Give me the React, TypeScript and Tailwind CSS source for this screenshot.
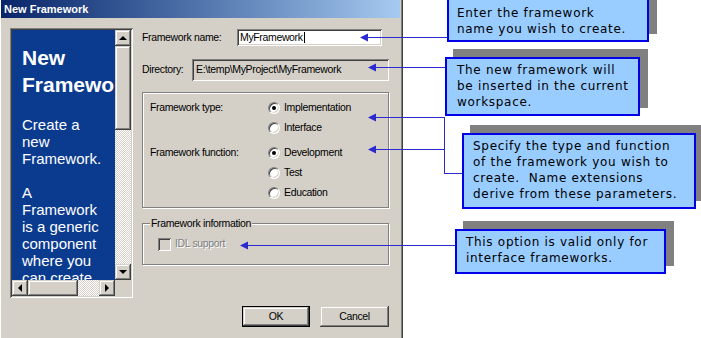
import type { ReactNode } from 'react';

const raised =
  'bg-[#d4d0c8] shadow-[inset_-1px_-1px_0_#404040,inset_1px_1px_0_#d4d0c8,inset_-2px_-2px_0_#808080,inset_2px_2px_0_#ffffff]';
const sunken =
  'shadow-[inset_1px_1px_0_#808080,inset_-1px_-1px_0_#ffffff,inset_2px_2px_0_#404040,inset_-2px_-2px_0_#d4d0c8]';
const etched = 'border border-[#808080] shadow-[inset_1px_1px_0_#ffffff,1px_1px_0_#ffffff]';
const checker =
  'bg-[image:repeating-conic-gradient(#ffffff_0_25%,#d4d0c8_0_50%)] bg-[length:2px_2px]';

function Radio({ checked, label }: { checked?: boolean; label: string }) {
  return (
    <div className="h-[20px] flex items-center gap-[4px]">
      <span className="w-[12px] h-[12px] rounded-full bg-white border border-t-[#808080] border-l-[#808080] border-b-white border-r-white shadow-[inset_1px_1px_0_#404040,inset_-1px_-1px_0_#d4d0c8] flex items-center justify-center shrink-0">
        {checked && <span className="w-[4px] h-[4px] rounded-full bg-black" />}
      </span>
      <span>{label}</span>
    </div>
  );
}

function ArrowButton({ dir }: { dir: 'up' | 'down' | 'left' | 'right' }) {
  const tri =
    dir === 'up'
      ? 'border-x-[4px] border-x-transparent border-b-[4px] border-b-black'
      : dir === 'down'
        ? 'border-x-[4px] border-x-transparent border-t-[4px] border-t-black'
        : dir === 'left'
          ? 'border-y-[4px] border-y-transparent border-r-[4px] border-r-black'
          : 'border-y-[4px] border-y-transparent border-l-[4px] border-l-black';
  return (
    <div className={`w-[16px] h-[16px] shrink-0 flex items-center justify-center ${raised}`}>
      <span className={`w-0 h-0 ${tri}`} />
    </div>
  );
}

function Callout({ className, children }: { className: string; children: ReactNode }) {
  return (
    <div
      className={`absolute bg-[#99ccff] border-2 border-[#0000e6] shadow-[8px_-8px_0_#808080] text-black text-[12px] leading-[16px] tracking-[0.7px] whitespace-nowrap font-['DejaVu_Sans',sans-serif] ${className}`}
    >
      {children}
    </div>
  );
}

export default function App() {
  return (
    <div className="relative w-[701px] h-[338px] bg-white overflow-hidden flex">
      {/* dialog */}
      <div className="w-[403px] h-[338px] shrink-0 bg-[#d4d0c8] shadow-[inset_-1px_0_0_#404040,inset_-2px_0_0_#808080,inset_1px_0_0_#ffffff] flex flex-col font-['Liberation_Sans',sans-serif] text-[10.5px] tracking-[-0.35px] text-black">
        <div className="ml-[1px] w-[399px] h-[18px] shrink-0 bg-gradient-to-r from-[#0a246a] to-[#a6caf0] flex items-center pl-[3px] text-white font-bold text-[11px] tracking-normal">
          New Framework
        </div>

        <div className="flex pt-[10px] pl-[10px]">
          {/* left info panel */}
          <div className={`w-[123px] h-[270px] p-[2px] flex flex-col ${sunken}`}>
            <div className="flex flex-1 min-h-0">
              <div className="flex-1 bg-[#0b3b8f] overflow-hidden text-white pl-[10px] pt-[14px] tracking-normal whitespace-nowrap">
                <div className="text-[21px] font-bold leading-[27px]">
                  New
                  <br />
                  Framework
                </div>
                <div className="mt-[18px] text-[15px] leading-[17px]">
                  Create a<br />
                  new
                  <br />
                  Framework.
                  <br />
                  <br />
                  A<br />
                  Framework
                  <br />
                  is a generic
                  <br />
                  component
                  <br />
                  where you
                  <br />
                  can create
                </div>
              </div>
              <div className={`w-[16px] flex flex-col ${checker}`}>
                <ArrowButton dir="up" />
                <div className={`h-[84px] ${raised}`} />
                <div className="flex-1" />
                <ArrowButton dir="down" />
              </div>
            </div>
            <div className="h-[16px] flex shrink-0">
              <div className={`flex-1 flex ${checker}`}>
                <ArrowButton dir="left" />
                <div className={`w-[50px] ${raised}`} />
                <div className="flex-1" />
                <ArrowButton dir="right" />
              </div>
              <div className="w-[16px] bg-[#d4d0c8]" />
            </div>
          </div>

          {/* form */}
          <div className="ml-[9px] w-[247px] flex flex-col">
            <div className="mt-[1px] h-[17px] flex items-center">
              <span className="w-[95px]">Framework name:</span>
              <div className={`w-[145px] h-[17px] bg-white flex items-center pl-[3px] ${sunken}`}>
                <span>MyFramework</span>
                <span className="w-px h-[11px] bg-black ml-px" />
              </div>
            </div>

            <div className="mt-[13px] h-[22px] flex items-center">
              <span className="w-[50px]">Directory:</span>
              <div className={`w-[197px] h-[22px] flex items-center pl-[4px] bg-[#d4d0c8] ${sunken}`}>
                {'E:\\temp\\MyProject\\MyFramework'}
              </div>
            </div>

            <div className={`mt-[11px] h-[116px] pl-[7px] pt-[5px] ${etched}`}>
              <div className="flex">
                <div className="w-[118px] h-[20px] flex items-center">Framework type:</div>
                <div className="flex flex-col">
                  <Radio checked label="Implementation" />
                  <Radio label="Interface" />
                </div>
              </div>
              <div className="flex mt-[5px]">
                <div className="w-[118px] h-[20px] flex items-center">Framework function:</div>
                <div className="flex flex-col">
                  <Radio checked label="Development" />
                  <Radio label="Test" />
                  <Radio label="Education" />
                </div>
              </div>
            </div>

            <div className={`relative mt-[15px] h-[42px] pl-[15px] flex items-center gap-[4px] ${etched}`}>
              <span className="absolute left-[7px] top-[-8px] px-[1px] bg-[#d4d0c8] leading-[14px]">
                Framework information
              </span>
              <span className={`w-[13px] h-[13px] bg-[#d4d0c8] ${sunken}`} />
              <span className="text-[#808080] [text-shadow:1px_1px_0_#ffffff]">IDL support</span>
            </div>

            <div className="mt-[41px] pl-[100px] flex gap-[10px]">
              <div className="w-[69px] h-[21px] border border-black">
                <div className={`w-full h-full flex items-center justify-center ${raised}`}>OK</div>
              </div>
              <div className={`w-[70px] h-[21px] flex items-center justify-center ${raised}`}>Cancel</div>
            </div>
          </div>
        </div>
      </div>

      {/* connector lines */}
      <svg className="absolute left-0 top-0 pointer-events-none" width="701" height="338">
        <g stroke="#2a2ad0" strokeWidth="1" fill="none">
          <line x1="367" y1="37.5" x2="447" y2="37.5" />
          <line x1="375" y1="67.5" x2="445" y2="67.5" />
          <line x1="375" y1="117.5" x2="444.5" y2="117.5" />
          <line x1="375" y1="149.5" x2="444.5" y2="149.5" />
          <line x1="444.5" y1="117" x2="444.5" y2="174" />
          <line x1="444.5" y1="173.5" x2="462" y2="173.5" />
          <line x1="247" y1="245.5" x2="455" y2="245.5" />
        </g>
        <g fill="#2a2ad0">
          <polygon points="360,37.5 368,33.5 368,41.5" />
          <polygon points="368,67.5 376,63.5 376,71.5" />
          <polygon points="368,117.5 376,113.5 376,121.5" />
          <polygon points="368,149.5 376,145.5 376,153.5" />
          <polygon points="240,245.5 248,241.5 248,249.5" />
        </g>
      </svg>

      {/* callouts */}
      <Callout className="left-[447px] top-[-2px] w-[202px] h-[44px] pl-[8px] pt-[5px]">
        Enter the framework
        <br />
        name you wish to create.
      </Callout>
      <Callout className="left-[445px] top-[57px] w-[195px] h-[59px] pl-[10px] pt-[3px]">
        The new framework will
        <br />
        be inserted in the current
        <br />
        workspace.
      </Callout>
      <Callout className="left-[462px] top-[133px] w-[234px] h-[76px] pl-[9px] pt-[3px]">
        Specify the type and function
        <br />
        of the framework you wish to
        <br />
        create.&nbsp; Name extensions
        <br />
        derive from these parameters.
      </Callout>
      <Callout className="left-[455px] top-[229px] w-[211px] h-[45px] pl-[9px] pt-[3px]">
        This option is valid only for
        <br />
        interface frameworks.
      </Callout>
    </div>
  );
}
